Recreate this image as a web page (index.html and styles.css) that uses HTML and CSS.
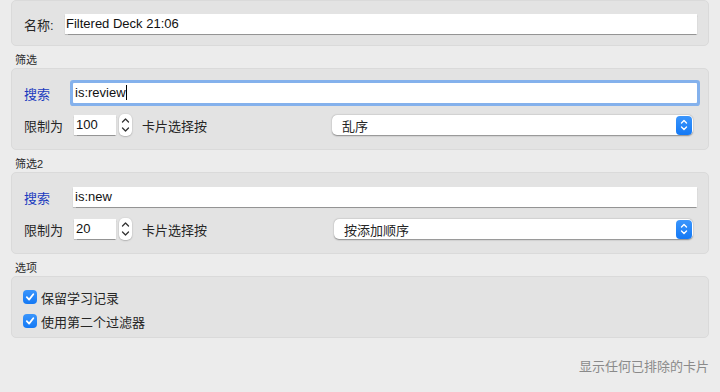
FILE: index.html
```html
<!DOCTYPE html>
<html lang="zh-CN">
<head>
    <meta charset="UTF-8">
    <title>Filtered Deck</title>
    <link rel="stylesheet" href="styles.css">
</head>
<body>
    <div class="box box-name">
        <div class="row">
            <span class="name-label">名称:</span>
            <div class="field name-field">Filtered Deck 21:06</div>
        </div>
    </div>

    <div class="section-label">筛选</div>
    <div class="box">
        <div class="row">
            <span class="search-label">搜索</span>
            <div class="field search-field focused">is:review<span class="caret"></span></div>
        </div>
        <div class="row">
            <span class="limit-label">限制为</span>
            <div class="field num-field">100</div>
            <div class="stepper">
                <svg width="9" height="18" viewBox="0 0 9 18"><path d="M1.5 6 L4.5 3 L7.5 6 M1.5 12 L4.5 15 L7.5 12" fill="none" stroke="#333" stroke-width="1.3" stroke-linecap="round" stroke-linejoin="round"/></svg>
            </div>
            <span class="order-label">卡片选择按</span>
            <div class="select">
                <span>乱序</span>
                <div class="select-btn">
                    <svg width="10" height="14" viewBox="0 0 10 14"><path d="M2.5 5 L5 2.5 L7.5 5 M2.5 9 L5 11.5 L7.5 9" fill="none" stroke="#fff" stroke-width="1.4" stroke-linecap="round" stroke-linejoin="round"/></svg>
                </div>
            </div>
        </div>
    </div>

    <div class="section-label">筛选2</div>
    <div class="box">
        <div class="row">
            <span class="search-label">搜索</span>
            <div class="field search-field">is:new</div>
        </div>
        <div class="row">
            <span class="limit-label">限制为</span>
            <div class="field num-field">20</div>
            <div class="stepper">
                <svg width="9" height="18" viewBox="0 0 9 18"><path d="M1.5 6 L4.5 3 L7.5 6 M1.5 12 L4.5 15 L7.5 12" fill="none" stroke="#333" stroke-width="1.3" stroke-linecap="round" stroke-linejoin="round"/></svg>
            </div>
            <span class="order-label">卡片选择按</span>
            <div class="select select-wide">
                <span>按添加顺序</span>
                <div class="select-btn">
                    <svg width="10" height="14" viewBox="0 0 10 14"><path d="M2.5 5 L5 2.5 L7.5 5 M2.5 9 L5 11.5 L7.5 9" fill="none" stroke="#fff" stroke-width="1.4" stroke-linecap="round" stroke-linejoin="round"/></svg>
                </div>
            </div>
        </div>
    </div>

    <div class="section-label">选项</div>
    <div class="box box-options">
        <label class="check-row">
            <span class="checkbox">
                <svg width="10" height="10" viewBox="0 0 10 10"><path d="M1.8 5.2 L4.1 7.6 L8.3 2.3" fill="none" stroke="#fff" stroke-width="1.8" stroke-linecap="round" stroke-linejoin="round"/></svg>
            </span>
            保留学习记录
        </label>
        <label class="check-row">
            <span class="checkbox">
                <svg width="10" height="10" viewBox="0 0 10 10"><path d="M1.8 5.2 L4.1 7.6 L8.3 2.3" fill="none" stroke="#fff" stroke-width="1.8" stroke-linecap="round" stroke-linejoin="round"/></svg>
            </span>
            使用第二个过滤器
        </label>
    </div>

    <div class="footer-note">显示任何已排除的卡片</div>
</body>
</html>
```

FILE: styles.css
```css
body {
    margin: 0;
    padding: 0 11px;
    background: #ececec;
    font-family: "Liberation Sans", "Noto Sans CJK SC", sans-serif;
    font-size: 13px;
    color: #262626;
}

.box {
    background: #e3e3e3;
    border: 1px solid #dadada;
    border-radius: 5px;
    padding: 11px 11px;
    display: flex;
    flex-direction: column;
    gap: 6px;
}

.box-name {
    padding: 10px 11px 8px;
}

.section-label {
    padding: 6px 0 0 4px;
    line-height: 16px;
    height: 16px;
    font-size: 11px;
    color: #2a2a2a;
}

.row {
    display: flex;
    align-items: center;
    height: 26px;
}

.name-label {
    width: 41px;
    padding-left: 1px;
}

.field {
    background: #fff;
    height: 20px;
    line-height: 20px;
    box-sizing: border-box;
    padding: 0 2px;
    box-shadow: 0 0.5px 1px rgba(0, 0, 0, 0.35);
    color: #111;
}

.name-field {
    flex: 1;
    padding-left: 1px;
}

.search-label {
    width: 49px;
    padding-left: 1px;
    color: #1b3bbf;
}

.search-field {
    flex: 1;
    padding-left: 2px;
}

.search-field.focused {
    box-shadow: 0 0 0 3px #84b1ec;
    border-radius: 1px;
}

.caret {
    display: inline-block;
    width: 1px;
    height: 15px;
    background: #000;
    vertical-align: -3px;
}

.limit-label {
    width: 50px;
    padding-left: 1px;
}

.num-field {
    width: 42px;
}

.stepper {
    width: 13px;
    height: 22px;
    margin-left: 3px;
    background: #fff;
    border-radius: 5px;
    box-shadow: 0 0.5px 1.5px rgba(0, 0, 0, 0.35);
    display: flex;
    align-items: center;
    justify-content: center;
}

.order-label {
    margin-left: 10px;
}

.select {
    margin-left: auto;
    margin-right: 4px;
    width: 361px;
    height: 20px;
    background: #fff;
    border-radius: 5px;
    box-shadow: 0 0.5px 1.5px rgba(0, 0, 0, 0.4);
    display: flex;
    align-items: center;
    justify-content: space-between;
    padding-left: 10px;
    box-sizing: border-box;
}

.select-wide {
    width: 359px;
}

.select-btn {
    width: 16px;
    height: 19px;
    margin-right: 1px;
    border-radius: 4px;
    background: linear-gradient(#3a95fc, #1479f5);
    display: flex;
    align-items: center;
    justify-content: center;
}

.box-options {
    padding: 9px 11px 5px;
    gap: 2px;
}

.check-row {
    display: flex;
    align-items: center;
    height: 22px;
    gap: 4px;
}

.checkbox {
    width: 14px;
    height: 14px;
    border-radius: 4px;
    background: linear-gradient(#3a95fc, #1479f5);
    display: flex;
    align-items: center;
    justify-content: center;
}

.footer-note {
    margin-top: 21px;
    line-height: 16px;
    text-align: right;
    color: #8a8a8a;
}
```
